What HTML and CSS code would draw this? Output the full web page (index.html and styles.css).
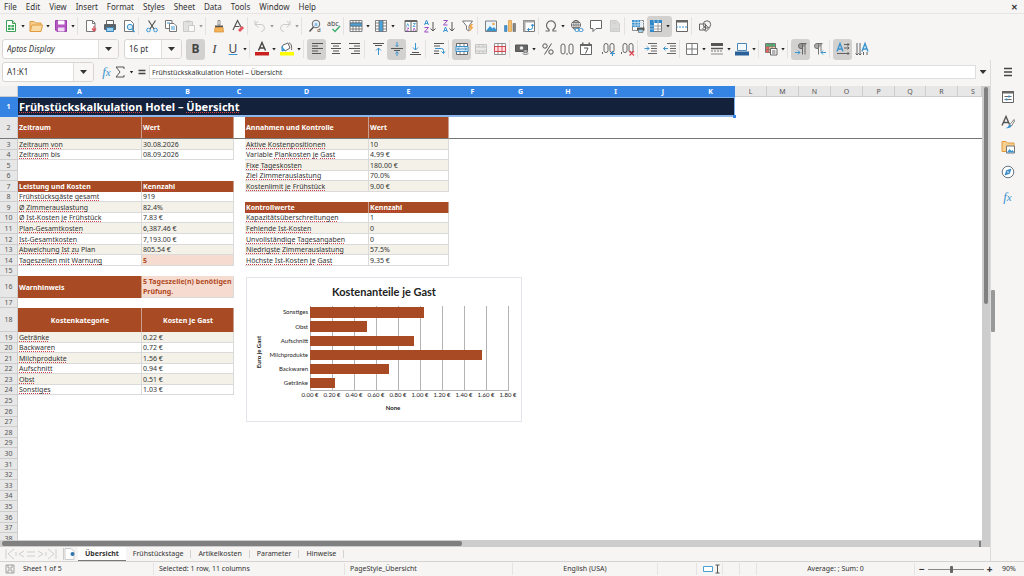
FILE: index.html
```html
<!DOCTYPE html>
<html lang="de">
<head>
<meta charset="utf-8">
<title>Frühstückskalkulation Hotel – Übersicht</title>
<link rel="stylesheet" href="styles.css">
</head>
<body>
<div class="app">
<nav class="menubar">
<button>File</button><button>Edit</button><button>View</button><button>Insert</button><button>Format</button><button>Styles</button><button>Sheet</button><button>Data</button><button>Tools</button><button>Window</button><button>Help</button>
<button class="close" aria-label="Close">✕</button>
</nav>

<div class="toolbar" role="toolbar" aria-label="Standard">
<button class="tb split" aria-label="New"><svg viewBox="0 0 14 14"><path d="M2.500 1.500h6l3 3v8h-9z" fill="#fff" stroke="#3f9e57"/><path d="M8.500 1.500v3h3" fill="#bfe3c8" stroke="#3f9e57"/><path d="M4 6h6v5H4z" fill="#3fae5f"/><path d="M4 8.500h6M7 6v5" stroke="#fff" stroke-width=".7"/></svg><i></i></button>
<button class="tb split" aria-label="Open"><svg viewBox="0 0 14 14"><path d="M1 12V2.500h4l1.500 1.500H12V6" fill="#f7cf8f" stroke="#e09b40"/><path d="M1 12.500 3 6h10.500L12 12.500z" fill="#fbdca6" stroke="#e09b40"/></svg><i></i></button>
<button class="tb split" aria-label="Save"><svg viewBox="0 0 14 14"><path d="M1.500 1.500h11v11H3l-1.500-1.500z" fill="#b558c4" stroke="#9a3fab"/><path d="M4 1.500h6.500v4H4z" fill="#fff"/><path d="M4 8.500h6.500v4H4z" fill="#f0dcf4"/></svg><i></i></button>
<span class="sep"></span>
<button class="tb" aria-label="Export as PDF"><svg viewBox="0 0 14 14"><path d="M2.500 1.500h6l2.500 2.500v8.500H2.500z" fill="#fff" stroke="#777"/><path d="M8.500 1.500v3H11" fill="none" stroke="#777"/><path d="M10 7v4.500M8 9.500l2 2.500 2-2.500" fill="none" stroke="#dc5560" stroke-width="1.300"/></svg></button>
<button class="tb" aria-label="Print"><svg viewBox="0 0 14 14"><path d="M3.500 5V1.500h7V5" fill="#fff" stroke="#666"/><rect x="1" y="5" width="12" height="6" rx="1" fill="#5c6166"/><path d="M3.500 8.500h7v4h-7z" fill="#9fd0f0" stroke="#3a84b8"/></svg></button>
<button class="tb" aria-label="Print preview"><svg viewBox="0 0 14 14"><path d="M2.500 1.500h6l3 3v8h-9z" fill="#fff" stroke="#777"/><circle cx="8" cy="8" r="2.700" fill="#d8edf9" stroke="#3a94cf"/><path d="m10 10 2.500 3" stroke="#3a94cf" stroke-width="1.300"/></svg></button>
<span class="sep"></span>
<button class="tb" aria-label="Cut"><svg viewBox="0 0 14 14"><path d="M3.500 1.500 9 10M10.500 1.500 5 10" stroke="#555" fill="none" stroke-width="1.200"/><circle cx="3.500" cy="11" r="1.800" fill="none" stroke="#3a94cf"/><circle cx="10.500" cy="11" r="1.800" fill="none" stroke="#3a94cf"/></svg></button>
<button class="tb" aria-label="Copy"><svg viewBox="0 0 14 14"><path d="M1.500 1.500h6.500v8h-6.500z" fill="#fff" stroke="#777"/><path d="M5.500 4.500h4.500l2.500 2.500v5.500h-7z" fill="#fff" stroke="#777"/><path d="M7 8h4M7 10h4M3 4h3" stroke="#3a94cf"/></svg></button>
<button class="tb split dim" aria-label="Paste"><svg viewBox="0 0 14 14"><path d="M1.500 2.500h9v10h-9z" fill="#ccc" stroke="#999"/><path d="M4 1.500h4v2H4z" fill="#999"/><path d="M6.500 6.500h6v6h-6z" fill="#fff" stroke="#999"/></svg><i></i></button>
<span class="sep"></span>
<button class="tb" aria-label="Clone formatting"><svg viewBox="0 0 14 14"><path d="M6 1.500h2V6H6z" fill="#fff" stroke="#777" stroke-width=".8"/><path d="M3 6.500h8v2H3z" fill="#555"/><path d="M3 8.500h8l.5 4.500H2.500z" fill="#f2b35a" stroke="#d98c2b" stroke-width=".7"/></svg></button>
<button class="tb" aria-label="Clear formatting"><svg viewBox="0 0 14 14"><path d="M2 11 6.500 1.500 10 8M4 7.500h4.500" stroke="#555" stroke-width="1.200" fill="none"/><path d="m7 11 4-4 2 2-4 4z" fill="#e4505b"/></svg></button>
<span class="sep"></span>
<button class="tb split dim" aria-label="Undo"><svg viewBox="0 0 14 14"><path d="M5 2 2 5.500h6a3.500 3.500 0 0 1 0 7M2 5.500 5.500 8.500M2 1.500v4" fill="none" stroke="#999"/></svg><i></i></button>
<button class="tb split dim" aria-label="Redo"><svg viewBox="0 0 14 14"><path d="m9 2 3 3.500H6a3.500 3.500 0 0 0 0 7M12 5.500 8.500 8.500M12 1.500v4" fill="none" stroke="#999"/></svg><i></i></button>
<span class="sep"></span>
<button class="tb" aria-label="Find and replace"><svg viewBox="0 0 14 14"><circle cx="8" cy="5" r="3.800" fill="#e8f3fb" stroke="#666"/><path d="M5.500 8 1.500 12.500" stroke="#555" stroke-width="1.500"/><text x="6" y="7" font-size="6" fill="#3a94cf">a</text><text x="9" y="13" font-size="6" fill="#444">d</text></svg></button>
<button class="tb" aria-label="Spelling"><svg viewBox="0 0 14 14"><text x="0" y="7" font-size="7" fill="#444">abc</text><path d="m5.500 10 2.500 2.500L13 7" fill="none" stroke="#3fae6f" stroke-width="1.400"/></svg></button>
<span class="sep"></span>
<button class="tb split" aria-label="Row"><svg viewBox="0 0 14 14"><path d="M1 1.500h12v11H1z" fill="#fff"/><path d="M1 3.500h12v4H1z" fill="#4ba3dc"/><path d="M1 1.500h12v11H1zM1 4h12M1 7h12M1 10h12M4 1.500v2.500M7 1.500v2.500M10 1.500v2.500M4 7v5.500M7 7v5.500M10 7v5.500" fill="none" stroke="#666" stroke-width=".8"/></svg><i></i></button>
<button class="tb split" aria-label="Column"><svg viewBox="0 0 14 14"><path d="M1.500 1.500h11v11h-11z" fill="#fff"/><path d="M5 1.500h4v11H5z" fill="#4ba3dc"/><path d="M1.500 1.500h11v11h-11zM5 1.500v11M9 1.500v11M1.500 4H5M1.500 7H5M1.500 10H5M9 4h3.500M9 7h3.500M9 10h3.500" fill="none" stroke="#666" stroke-width=".8"/></svg><i></i></button>
<span class="sep clear"></span>
<button class="tb" aria-label="Sort"><svg viewBox="0 0 14 14"><path d="M1 1.500h12v11H1z" fill="#fff" stroke="#666"/><path d="M1 1h12v2H1zM6.500 3h1v10h-1z" fill="#666"/><path d="m2.500 7.500 1.200-3 1.300 3M9 4.500h2.500L9 7.500h2.500" fill="none" stroke="#3a94cf" stroke-width=".8"/><path d="M2.500 9H5l-2.500 3H5M9 12l1.200-3 1.300 3" fill="none" stroke="#9a4fc0" stroke-width=".8"/></svg></button>
<button class="tb" aria-label="Sort ascending"><svg viewBox="0 0 14 14"><path d="m1.500 6 2-5 2 5M2 4.500h3" fill="none" stroke="#3a94cf"/><path d="M1.500 8.500h4l-4 4.500h4" fill="none" stroke="#9a4fc0"/><path d="M10 3v9M7.500 9.500 10 12l2.500-2.500" fill="none" stroke="#555"/></svg></button>
<button class="tb" aria-label="Sort descending"><svg viewBox="0 0 14 14"><path d="M1.500 1.500h4l-4 4.500h4" fill="none" stroke="#9a4fc0"/><path d="m1.500 13 2-5 2 5M2 11.500h3" fill="none" stroke="#3a94cf"/><path d="M10 3v9M7.500 9.500 10 12l2.500-2.500" fill="none" stroke="#555"/></svg></button>
<button class="tb" aria-label="AutoFilter"><svg viewBox="0 0 14 14"><path d="M1.500 2h10L8 7v5l-2.500-1.500V7z" fill="#fff" stroke="#777"/><path d="m10 5-2.500 4h2L8.500 13l4-5h-2l1.500-3z" fill="#f2a74a"/></svg></button>
<span class="sep"></span>
<button class="tb" aria-label="Insert image"><svg viewBox="0 0 14 14"><path d="M1.500 2h11v10.500h-11z" fill="#eaf5fc" stroke="#7a7f84"/><path d="m2 12 4-5 2.500 2.500L10 8l2.500 3v1z" fill="#3a94cf"/><circle cx="9.500" cy="5" r="1.300" fill="#f2a74a"/></svg></button>
<button class="tb" aria-label="Insert chart"><svg viewBox="0 0 14 14"><path d="M1.500 6.500h2.500v6h-2.500z" fill="#4b93cc" stroke="#2f76ae" stroke-width=".6"/><path d="M5.500 1.500h3v11h-3z" fill="#f5c06b" stroke="#d98c2b" stroke-width=".6"/><path d="M10 4.500h2.500v8H10z" fill="#888" stroke="#666" stroke-width=".6"/></svg></button>
<button class="tb" aria-label="Pivot table"><svg viewBox="0 0 14 14"><path d="M1.500 1.500h11v11h-11z" fill="#fff" stroke="#777"/><path d="M1.500 1.500h11v2h-11zM1.500 3.500h2v9h-2z" fill="#aaa"/><path d="M5.500 10.500h3a2 2 0 0 0 2-2v-3M9 7l1.500-2L12 7M7 9l-1.500 1.500L7 12" fill="none" stroke="#3a94cf"/></svg></button>
<span class="sep"></span>
<button class="tb split" aria-label="Special character"><svg viewBox="0 0 14 14"><path d="M1.500 12h3.500v-1.500a4.500 4.500 0 1 1 4 0V12h3.500" fill="none" stroke="#666" stroke-width="1.200"/></svg><i></i></button>
<button class="tb" aria-label="Hyperlink"><svg viewBox="0 0 14 14"><circle cx="6" cy="6" r="4.500" fill="#fff" stroke="#666"/><path d="M1.500 6h9M6 1.500v9M2.500 3.500h7M2.500 8.500h7" stroke="#666" stroke-width=".8"/><ellipse cx="6" cy="6" rx="2.200" ry="4.500" fill="none" stroke="#666" stroke-width=".8"/><rect x="5" y="9.500" width="4" height="3" rx="1.500" fill="#f6f5f4" stroke="#3a94cf"/><rect x="9" y="9.500" width="4" height="3" rx="1.500" fill="#f6f5f4" stroke="#3a94cf"/></svg></button>
<button class="tb" aria-label="Comment"><svg viewBox="0 0 14 14"><path d="M1.500 1.500h11v8H7l-3 3v-3H1.500z" fill="#fff" stroke="#666"/></svg></button>
<button class="tb dim" aria-label="Headers and footers"><svg viewBox="0 0 14 14"><path d="M2.500 1.500h6l3 3v8h-9z" fill="#bbb" stroke="#999"/><path d="M4 4h4M4 10h6" stroke="#999"/></svg></button>
<span class="sep"></span>
<button class="tb" aria-label="Define print area"><svg viewBox="0 0 14 14"><path d="M1.500 1.500h11v10h-11z" fill="#fff" stroke="#888"/><path d="M1 1h8v7H1z" fill="#3a94cf"/><path d="M1 3.500h12M1 6h12M4 1v10.500M7 1v10.500M10 1v10.500" stroke="#ccdfee" stroke-width=".8"/><path d="M6 8.500h7.500v3H6z" fill="#555"/><path d="M7.500 10.500h4.500v3H7.500z" fill="#9fd0f0" stroke="#555" stroke-width=".6"/></svg></button>
<button class="tb split on" aria-label="Freeze rows and columns"><svg viewBox="0 0 14 14"><path d="M1.500 1.500h11v11h-11z" fill="#fff" stroke="#777"/><path d="M1 1h12v3H1zM1 1h4v12H1z" fill="#2f88c9"/><path d="M5 7h8M5 10h8M9 4v9" stroke="#888" stroke-width=".8"/><path d="M1 7h4M5 1v3M9 1v3M1 10h4" stroke="#bcd9ee" stroke-width=".8"/></svg><i></i></button>
<button class="tb" aria-label="Split window"><svg viewBox="0 0 14 14"><path d="M1.500 1.500h11v11h-11z" fill="#fff" stroke="#666"/><path d="M1 1h12v2.500H1z" fill="#666"/><path d="M1 8h12" stroke="#3a94cf" stroke-dasharray="2 1"/></svg></button>
<span class="sep"></span>
<button class="tb" aria-label="Draw functions"><svg viewBox="0 0 14 14"><circle cx="9" cy="5.500" r="3.700" fill="none" stroke="#666"/><path d="M1.500 5h6v6h-6z" fill="none" stroke="#666"/><path d="m8 6 3 3.500-3 3-3-3z" fill="none" stroke="#666"/></svg></button>
</div>

<div class="toolbar format" role="toolbar" aria-label="Formatting">
<span class="combo fontname"><input aria-label="Font name" value="Aptos Display"><button aria-label="Font list"><b class="tri"></b></button></span>
<span class="combo fontsize"><input aria-label="Font size" value="16 pt"><button aria-label="Size list"><b class="tri"></b></button></span>
<button class="tb on glyph strong" aria-label="Bold">B</button>
<button class="tb glyph ital" aria-label="Italic">I</button>
<button class="tb split glyph under" aria-label="Underline"><span>U</span><i></i></button>
<span class="sep"></span>
<button class="tb split" aria-label="Font color"><svg viewBox="0 0 14 14"><path d="M3.500 8.500 7 .5l3.500 8M4.800 6h4.400" fill="none" stroke="#444" stroke-width="1.400"/><path d="M0 10h14v3.500H0z" fill="#c9211e"/></svg><i></i></button>
<button class="tb split" aria-label="Highlighting"><svg viewBox="0 0 14 14"><path d="m3 3 5-2 2 5-5 3-3-3z" fill="#fff" stroke="#666"/><path d="M2 4v5l3-1" fill="#4ba3dc" stroke="#3a94cf"/><path d="M9 1c2 0 3 3 2.500 7" fill="none" stroke="#666"/><path d="M0 10h14v3.500H0z" fill="#ffff00"/></svg><i></i></button>
<span class="sep"></span>
<button class="tb on" aria-label="Align left"><svg viewBox="0 0 14 14"><path d="M2 1.500h11M2 4h6M2 6.500h11M2 9h6M2 11.500h9" stroke="#555"/></svg></button>
<button class="tb" aria-label="Center"><svg viewBox="0 0 14 14"><path d="M2 1.500h10M4 4h6M2 6.500h10M4 9h6M3 11.500h8" stroke="#555"/></svg></button>
<button class="tb" aria-label="Align right"><svg viewBox="0 0 14 14"><path d="M1 1.500h11M6 4h6M1 6.500h11M6 9h6M3 11.500h9" stroke="#555"/></svg></button>
<span class="sep"></span>
<button class="tb" aria-label="Align top"><svg viewBox="0 0 14 14"><path d="M2 1.500h11M4 3.500h7" stroke="#555"/><path d="M7.500 13V6M5 8.500 7.500 6 10 8.500" fill="none" stroke="#3a94cf"/></svg></button>
<button class="tb on" aria-label="Center vertically"><svg viewBox="0 0 14 14"><path d="M1 6.500h12M4 8.500h6" stroke="#555"/><path d="M7 0v4.500M5.500 3 7 4.500 8.500 3M7 14V9.500M5.500 11.500 7 10l1.500 1.500" fill="none" stroke="#3a94cf"/></svg></button>
<button class="tb" aria-label="Align bottom"><svg viewBox="0 0 14 14"><path d="M1 12.500h11M3 10.500h7" stroke="#555"/><path d="M6.500 1v7M4 5.500 6.500 8 9 5.500" fill="none" stroke="#3a94cf"/></svg></button>
<span class="sep"></span>
<button class="tb" aria-label="Wrap text"><svg viewBox="0 0 14 14"><path d="M2 1.500h10M2 4h6M2 9h5M2 11.500h5" stroke="#555"/><path d="M3 6.500h6.500a2 2 0 0 1 2 2v3M9.500 9.500l2 2 1.500-2" fill="none" stroke="#3a94cf"/></svg></button>
<span class="sep"></span>
<button class="tb on" aria-label="Merge and center"><svg viewBox="0 0 14 14"><path d="M1.500 1.500h11v11h-11z" fill="#fff" stroke="#666"/><path d="M1 4.500h12v5H1z" fill="#d8edf9" stroke="#3a94cf"/><path d="M5 1.500v3M9 1.500v3M5 9.500v3M9 9.500v3" stroke="#666" stroke-width=".8"/><path d="M2.500 7h9M4 5.500 2.500 7 4 8.500M10 5.500 11.500 7 10 8.500" fill="none" stroke="#2f76ae" stroke-width=".8"/></svg></button>
<button class="tb dim" aria-label="Merge cells"><svg viewBox="0 0 14 14"><path d="M1.500 2.500h11v9h-11zM1.500 5h11M1.500 9h11M5 2.500V5M9 2.500V5M5 9v2.500M9 9v2.500" fill="#ddd" stroke="#888"/></svg></button>
<button class="tb" aria-label="Split cells"><svg viewBox="0 0 14 14"><path d="M1.500 1.500h11v11h-11zM5 1.500v11M9 1.500v11M1.500 4.500h11M1.500 9.500h11" fill="#fff" stroke="#777" stroke-width=".8"/><path d="M1.500 4.500h11v5h-11zM5 4.500v5M9 4.500v5" fill="#fbe1e2" stroke="#d9444f"/></svg></button>
<span class="sep"></span>
<button class="tb split" aria-label="Currency"><svg viewBox="0 0 14 14"><path d="M.5 3h12v6.500H.5z" fill="#666" stroke="#555"/><circle cx="6.500" cy="6" r="1.800" fill="#eee"/><ellipse cx="10.500" cy="9" rx="2.500" ry="1" fill="#eee" stroke="#555" stroke-width=".7"/><ellipse cx="10.500" cy="11.500" rx="2.500" ry="1" fill="#eee" stroke="#555" stroke-width=".7"/></svg><i></i></button>
<button class="tb" aria-label="Percent"><svg viewBox="0 0 14 14"><circle cx="4" cy="4" r="2.200" fill="none" stroke="#555"/><circle cx="10" cy="10" r="2.200" fill="none" stroke="#555"/><path d="M10.500 1.500 3.500 12.500" stroke="#555"/></svg></button>
<button class="tb" aria-label="Number"><svg viewBox="0 0 14 14"><rect x="1" y="2" width="4" height="10" rx="2" fill="none" stroke="#666"/><rect x="9" y="2" width="4" height="10" rx="2" fill="none" stroke="#666"/><path d="M7 11v2" stroke="#666"/></svg></button>
<button class="tb" aria-label="Date"><svg viewBox="0 0 14 14"><path d="M1.500 2.500h11v10h-11z" fill="#fff" stroke="#666"/><path d="M1 2h12v2H1zM3 .5h1.500V3H3zM9.500.5H11V3H9.500z" fill="#666"/><path d="M5 6h4l-2.500 5.500" fill="none" stroke="#555"/></svg></button>
<span class="sep clear"></span>
<button class="tb" aria-label="Add decimal place"><svg viewBox="0 0 14 14"><path d="M.5 10v2" stroke="#666"/><rect x="2" y="1.500" width="4" height="9" rx="2" fill="none" stroke="#666"/><rect x="8" y="1.500" width="4" height="9" rx="2" fill="none" stroke="#666"/><path d="M8 11.500h5M10.500 9v5" stroke="#3a94cf" stroke-width="1.200"/></svg></button>
<button class="tb" aria-label="Delete decimal place"><svg viewBox="0 0 14 14"><path d="M.5 10v2" stroke="#666"/><rect x="2" y="1.500" width="4" height="9" rx="2" fill="none" stroke="#666"/><rect x="8" y="1.500" width="4" height="9" rx="2" fill="none" stroke="#666"/><path d="m8.500 9 4.500 4.500M13 9l-4.500 4.500" stroke="#e0444f" stroke-width="1.200"/></svg></button>
<span class="sep"></span>
<button class="tb" aria-label="Increase indent"><svg viewBox="0 0 14 14"><path d="M4 1.500h9M7 4h6M7 6.500h6M7 9h6M4 11.500h9" stroke="#666"/><path d="M.5 6.500H5M3 4.500l2 2-2 2" fill="none" stroke="#3a94cf"/></svg></button>
<button class="tb" aria-label="Decrease indent"><svg viewBox="0 0 14 14"><path d="M4 1.500h9M7 4h6M7 6.500h6M7 9h6M4 11.500h9" stroke="#666"/><path d="M.5 6.500H5M2.500 4.500l-2 2 2 2" fill="none" stroke="#3a94cf"/></svg></button>
<span class="sep"></span>
<button class="tb split" aria-label="Borders"><svg viewBox="0 0 14 14"><path d="M1.500 1.500h11v11h-11zM7 1.500v11M1.500 7h11" fill="#fff" stroke="#777"/></svg><i></i></button>
<button class="tb split" aria-label="Border style"><svg viewBox="0 0 14 14"><path d="M1 1h12v3H1z" fill="#555"/><path d="M1 6.500h12" stroke="#555" stroke-width="1.500"/><path d="M1 9h12" stroke="#777" stroke-dasharray="2 1"/><path d="M1 11.500h12v1H1z" fill="#888"/></svg><i></i></button>
<button class="tb split" aria-label="Border color"><svg viewBox="0 0 14 14"><path d="M2.500 1.500h9v7h-9z" fill="#f4f8fb" stroke="#4b88b8"/><path d="M0 9.500h14v4H0z" fill="#2a6099"/></svg><i></i></button>
<span class="sep"></span>
<button class="tb split" aria-label="Conditional formatting"><svg viewBox="0 0 14 14"><path d="M1.500 1.500h10v9h-10z" fill="#f7c9a2" stroke="#777"/><path d="M2 2h9v2.500H2z" fill="#4fb46f"/><path d="M2 4.500h3v6H2z" fill="#e2665a"/><path d="M1.500 4.500h10M1.500 7.500h10M5 1.500v9M8 1.500v9" stroke="#777" stroke-width=".7"/><path d="M6.500 6.500h6.500v6.500H6.500z" fill="#fff" stroke="#666"/><path d="M8 9h3.500M8 11h3.500" stroke="#666"/></svg><i></i></button>
<span class="sep"></span>
<button class="tb on" aria-label="Left to right"><svg viewBox="0 0 14 14"><path d="M12.500 1.500H7a2.500 2.500 0 0 0 0 5h1" fill="#999" stroke="#666"/><path d="M8.500 1.500v11M11 1.500v11" stroke="#666"/><path d="M1 10.500h5M4 8.500l2 2-2 2" fill="none" stroke="#3a94cf"/></svg></button>
<button class="tb" aria-label="Right to left"><svg viewBox="0 0 14 14"><path d="M9.500 1.500H4a2.500 2.500 0 0 0 0 5h1.500" fill="#aaa" stroke="#777"/><path d="M5.500 1.500v11M8 1.500v8" stroke="#777"/><path d="M8 10.500h5M10 8.500l-2 2 2 2" fill="none" stroke="#3a94cf"/></svg></button>
<span class="sep"></span>
<button class="tb on" aria-label="Horizontal text"><svg viewBox="0 0 14 14"><path d="M1 9.500 4 1.500l3 8M2 7h4" fill="none" stroke="#3a94cf" stroke-width="1.400"/><path d="M8 2.500h5M8 6h5M1 11.500h12M11.500 1 13 2.500 11.500 4M11.500 4.500 13 6l-1.500 1.500M11.500 10l1.500 1.500-1.500 1.500" fill="none" stroke="#555" stroke-width=".9"/></svg></button>
<button class="tb" aria-label="Vertical text"><svg viewBox="0 0 14 14"><path d="M7 9.500 10 1.500l3 8M8 7h4" fill="none" stroke="#3a94cf" stroke-width="1.400"/><path d="M2 1v12M5 1v12M.500 11.500 2 13l1.500-1.500M3.500 11.500 5 13l1.500-1.500M8.500 10v3M12 10v3" fill="none" stroke="#555" stroke-width=".9"/></svg></button>
</div>

<div class="body">
<main class="main">
<div class="formulabar">
<span class="combo namebox"><input aria-label="Name box" value="A1:K1"><button aria-label="Names"><b class="tri"></b></button></span>
<button class="fb" aria-label="Function wizard"><span class="fx">f<small>x</small></span></button>
<button class="fb sum" aria-label="Select function"><svg viewBox="0 0 10 12"><path d="M9 3V1H1l4 5-4 5h8V9" fill="none" stroke="#555"/></svg><i></i></button>
<button class="fb" aria-label="Formula"><svg viewBox="0 0 10 12"><path d="M1.500 4.500h7M1.500 7.500h7" stroke="#444" stroke-width="1.300"/></svg></button>
<input class="formula" aria-label="Formula input" value="Frühstückskalkulation Hotel – Übersicht">
<button class="expand" aria-label="Expand formula bar"><b class="tri"></b></button>
</div>

<div class="gridarea">
<div class="sheet">
<table>
<colgroup><col class="c-row"><col class="c-a"><col class="c-b"><col class="c-c"><col class="c-a"><col class="c-e"><col class="c-w"><col class="c-w"><col class="c-v"><col class="c-w"><col class="c-v"><col class="c-w"><col class="c-n"><col class="c-n"><col class="c-n"><col class="c-n"><col class="c-n"><col class="c-m"><col class="c-n"><col></colgroup>
<thead><tr class="cols"><th class="corner"></th><th class="sel">A</th><th class="sel">B</th><th class="sel">C</th><th class="sel">D</th><th class="sel">E</th><th class="sel">F</th><th class="sel">G</th><th class="sel">H</th><th class="sel">I</th><th class="sel">J</th><th class="sel">K</th><th>L</th><th>M</th><th>N</th><th>O</th><th>P</th><th>Q</th><th>R</th><th class="last">S</th></tr></thead>
<tbody>
<tr class="r1"><th class="sel">1</th><td class="title" colspan="11"><u>Frühstückskalkulation</u> Hotel – <u>Übersicht</u><span class="handle"></span></td></tr>
<tr class="r2"><th>2</th><td class="h"><u>Zeitraum</u></td><td class="h"><u>Wert</u></td><td></td><td class="h">Annahmen und Kontrolle</td><td class="h">Wert</td><td colspan="14"></td></tr>
<tr><th>3</th><td class="d z"><u>Zeitraum</u> <u>von</u></td><td class="d z">30.08.2026</td><td></td><td class="d z"><u>Aktive Kostenpositionen</u></td><td class="d z">10</td></tr>
<tr class="s"><th>4</th><td class="d"><u>Zeitraum</u> bis</td><td class="d">08.09.2026</td><td></td><td class="d">Variable <u>Plankosten</u> <u>je</u> <u>Gast</u></td><td class="d">4.99 €</td></tr>
<tr><th>5</th><td></td><td></td><td></td><td class="d z"><u>Fixe</u> <u>Tageskosten</u></td><td class="d z">180.00 €</td></tr>
<tr class="s"><th>6</th><td></td><td></td><td></td><td class="d"><u>Ziel</u> <u>Zimmerauslastung</u></td><td class="d">70.0%</td></tr>
<tr><th>7</th><td class="h"><u>Leistung</u> <u>und</u> <u>Kosten</u></td><td class="h"><u>Kennzahl</u></td><td></td><td class="d z"><u>Kostenlimit</u> <u>je</u> <u>Frühstück</u></td><td class="d z">9.00 €</td></tr>
<tr class="s"><th>8</th><td class="d"><u>Frühstücksgäste</u> <u>gesamt</u></td><td class="d">919</td></tr>
<tr><th>9</th><td class="d z"><u>Ø</u> <u>Zimmerauslastung</u></td><td class="d z">82.4%</td><td></td><td class="h"><u>Kontrollwerte</u></td><td class="h"><u>Kennzahl</u></td></tr>
<tr class="s"><th>10</th><td class="d"><u>Ø</u> <u>Ist-Kosten</u> <u>je</u> <u>Frühstück</u></td><td class="d">7.83 €</td><td></td><td class="d"><u>Kapazitätsüberschreitungen</u></td><td class="d">1</td></tr>
<tr><th>11</th><td class="d z"><u>Plan-Gesamtkosten</u></td><td class="d z">6,387.46 €</td><td></td><td class="d z"><u>Fehlende</u> <u>Ist-Kosten</u></td><td class="d z">0</td></tr>
<tr><th>12</th><td class="d"><u>Ist-Gesamtkosten</u></td><td class="d">7,193.00 €</td><td></td><td class="d"><u>Unvollständige</u> <u>Tagesangaben</u></td><td class="d">0</td></tr>
<tr class="s"><th>13</th><td class="d z"><u>Abweichung</u> <u>Ist</u> <u>zu</u> Plan</td><td class="d z">805.54 €</td><td></td><td class="d z"><u>Niedrigste</u> <u>Zimmerauslastung</u></td><td class="d z">57.5%</td></tr>
<tr><th>14</th><td class="d"><u>Tageszeilen</u> <u>mit</u> <u>Warnung</u></td><td class="d warn">5</td><td></td><td class="d"><u>Höchste</u> <u>Ist-Kosten</u> <u>je</u> <u>Gast</u></td><td class="d">9.35 €</td></tr>
<tr class="s"><th>15</th></tr>
<tr class="r16"><th>16</th><td class="h">Warnhinweis</td><td class="d warn wrap">5 Tageszeile(n) benötigen Prüfung.</td></tr>
<tr class="s"><th>17</th></tr>
<tr class="r18"><th>18</th><td class="h mid">Kostenkategorie</td><td class="h mid">Kosten je Gast</td></tr>
<tr><th>19</th><td class="d z"><u>Getränke</u></td><td class="d z">0.22 €</td></tr>
<tr class="s"><th>20</th><td class="d"><u>Backwaren</u></td><td class="d">0.72 €</td></tr>
<tr><th>21</th><td class="d z"><u>Milchprodukte</u></td><td class="d z">1.56 €</td></tr>
<tr class="s"><th>22</th><td class="d"><u>Aufschnitt</u></td><td class="d">0.94 €</td></tr>
<tr><th>23</th><td class="d z"><u>Obst</u></td><td class="d z">0.51 €</td></tr>
<tr class="s"><th>24</th><td class="d"><u>Sonstiges</u></td><td class="d">1.03 €</td></tr>
<tr><th>25</th></tr>
<tr><th>26</th></tr>
<tr class="s"><th>27</th></tr>
<tr><th>28</th></tr>
<tr class="s"><th>29</th></tr>
<tr><th>30</th></tr>
<tr><th>31</th></tr>
<tr class="s"><th>32</th></tr>
<tr><th>33</th></tr>
<tr class="s"><th>34</th></tr>
<tr><th>35</th></tr>
<tr><th>36</th></tr>
<tr class="s"><th>37</th></tr>
<tr><th>38</th></tr>
</tbody>
</table>
<svg class="chart" viewBox="0 0 276 145" role="img" aria-label="Kostenanteile je Gast">
<rect x=".5" y=".5" width="275" height="144" fill="#fff" stroke="#e3e3ea"/>
<text class="ct" x="138" y="19">Kostenanteile je Gast</text>
<path d="M64.500 29v85M86.500 29v85M108.500 29v85M130.500 29v85M152.500 29v85M174.500 29v85M196.500 29v85M218.500 29v85M240.500 29v85M262.500 29v85M64 113.500h199" stroke="#b3b3b3" fill="none"/>
<g fill="#a84b25"><rect x="64" y="30" width="114" height="11"/><rect x="64" y="44" width="57" height="11"/><rect x="64" y="59" width="104" height="10"/><rect x="64" y="73" width="172" height="10"/><rect x="64" y="87" width="79" height="10"/><rect x="64" y="101" width="25" height="10"/></g>
<g class="cl"><text x="62" y="37">Sonstiges</text><text x="62" y="52">Obst</text><text x="62" y="66">Aufschnitt</text><text x="62" y="80">Milchprodukte</text><text x="62" y="94">Backwaren</text><text x="62" y="108">Getränke</text></g>
<g class="cx"><text x="64" y="120">0.00 €</text><text x="86" y="120">0.20 €</text><text x="108" y="120">0.40 €</text><text x="130" y="120">0.60 €</text><text x="152" y="120">0.80 €</text><text x="174" y="120">1.00 €</text><text x="196" y="120">1.20 €</text><text x="218" y="120">1.40 €</text><text x="240" y="120">1.60 €</text><text x="262" y="120">1.80 €</text></g>
<text class="ca" x="147" y="133">None</text>
<text class="ca" transform="translate(15 75) rotate(-90)">Euro je Gast</text>
</svg>
</div>
<div class="vscroll"><div class="vthumb"></div></div>
</div>
<div class="hscroll"><div class="hthumb"></div><div class="hgrip"></div></div>
<div class="tabs">
<span class="nav"><svg viewBox="0 0 52 12"><path d="M1 1v10M9 1 3 6l6 5M51 1v10M43 1l6 5-6 5M19 3l-5 3 5 3M33 3l5 3-5 3M22 4h8M22 8h8M11 4v4M41 4v4" fill="none" stroke="#cfcfcf"/></svg></span>
<button class="addtab" aria-label="Add sheet"><svg viewBox="0 0 12 12"><path d="M1 .500h6l3 3v8H1z" fill="#fff" stroke="#ccc"/><circle cx="8.500" cy="6" r="2" fill="#2f76ae"/></svg></button>
<button class="tab active">Übersicht</button><button class="tab">Frühstückstage</button><button class="tab">Artikelkosten</button><button class="tab">Parameter</button><button class="tab">Hinweise</button>
</div>
</main>
<aside class="sidebar">
<span class="grip"></span>
<button aria-label="Sidebar settings"><svg viewBox="0 0 14 14"><path d="M3 3.500h8M3 7h8M3 10.500h8" stroke="#444" stroke-width="1.300"/></svg></button>
<button aria-label="Properties"><svg viewBox="0 0 14 14"><path d="M1.500 1.500h11v11h-11z" fill="#fff" stroke="#666"/><path d="M1 1h12v2.500H1z" fill="#666"/><path d="M3.500 6.500h7M3.500 9.500h7" stroke="#666"/><path d="M8 5.500v2M5.500 8.500v2" stroke="#3a94cf" stroke-width="1.500"/></svg></button>
<button aria-label="Styles"><svg viewBox="0 0 14 14"><path d="M1 10.500 5 1.500l3.500 8M2.500 7.500h5" fill="none" stroke="#555" stroke-width="1.400"/><path d="m13 4.500-4 5 1.500 1.500L13.500 6z" fill="#fff" stroke="#666" stroke-width=".8"/><path d="M4.500 13c3 0 2.500-3 4.500-3.500l1.500 1.500c-1 2-3.500 2.500-6 2z" fill="#3a94cf"/></svg></button>
<button aria-label="Gallery"><svg viewBox="0 0 14 14"><path d="M1 11.500V1.500h4l1.500 1.500H13v8.500z" fill="#f7cf8f" stroke="#e09b40"/><path d="M5.500 6h8v7h-8z" fill="#fff" stroke="#777"/><path d="m6 12.500 2.500-3.500 2 2 1-1 2 2.500z" fill="#3a94cf"/></svg></button>
<button aria-label="Navigator"><svg viewBox="0 0 14 14"><circle cx="7" cy="7" r="5.800" fill="#fff" stroke="#6a7580"/><path d="M10 4 8.500 8.500 4 10l1.500-4.500z" fill="#3a94cf" stroke="#2f76ae" stroke-width=".6"/><circle cx="7" cy="7" r=".8" fill="#fff"/></svg></button>
<button aria-label="Functions"><span class="fx">f<small>x</small></span></button>
</aside>
</div>

<footer class="status">
<span class="st st-save"><svg viewBox="0 0 10 10"><path d="M1 1h8v8H1zM3 1v3h4V1M3 9V6h4v3" fill="none" stroke="#999" stroke-width=".9"/></svg>Sheet 1 of 5</span>
<span class="st st-sel">Selected: 1 row, 11 columns</span>
<span class="st st-page">PageStyle_Übersicht</span>
<span class="st st-lang">English (USA)</span>
<span class="st st-ins"></span>
<span class="st st-mode"><svg viewBox="0 0 18 10"><path d="M1.500 2.500h9v5h-9z" fill="#fff" stroke="#4aa0d0"/><path d="M13.500 1h4M13.500 9h4M15.500 1v8" stroke="#555" fill="none"/></svg></span>
<span class="st st-e"></span><span class="st st-e"></span>
<span class="st st-avg">Average: ; Sum: 0</span>
<span class="st-zoom"><button aria-label="Zoom out">−</button><input type="range" min="0" max="100" value="42" aria-label="Zoom"><button aria-label="Zoom in">+</button></span>
<span class="st-pct">90%</span>
</footer>
</div>
</body>
</html>
```
FILE: styles.css
```css
* { box-sizing: border-box; }
body { margin: 0; font: 7px/10px "Noto Sans", "Open Sans", sans-serif; color: #333; background: #f6f5f4; }
button, input { font: inherit; color: inherit; border: 0; background: none; padding: 0; margin: 0; min-width: 0; }
.app { height: 100vh; display: flex; flex-direction: column; overflow: hidden; }

.menubar { display: flex; align-items: center; height: 14px; padding: 0 6px 0 4px; gap: 9px; border-bottom: 1px solid #e6e5e4; flex: none; font-size: 8px; }
.menubar .close { margin-left: auto; font-weight: bold; }

.toolbar { display: flex; align-items: center; height: 24px; padding-left: 2px; flex: none; }
.toolbar.format { height: 22px; }
.tb { width: 19px; height: 21px; flex: none; display: flex; align-items: center; justify-content: center; border-radius: 3px; }
.tb.split { width: 25px; justify-content: flex-start; padding-left: 2px; gap: 3px; }
.tb svg { width: 14px; height: 14px; flex: none; overflow: visible; }
.tb.on { background: #d3d1cf; }
.tb.dim { opacity: .45; }
.tb i, .fb i { width: 4px; height: 3px; background: #222; clip-path: polygon(0 0, 100% 0, 50% 100%); }
.sep { width: 4px; height: 18px; border-left: 1px solid #e4e2e0; flex: none; }
.sep.clear { border-color: transparent; }
.glyph { font-size: 12px; color: #444; }
.glyph.strong { font-weight: bold; }
.glyph.ital { font-family: "Liberation Serif", serif; font-style: italic; font-size: 13px; }
.glyph.under span { width: 14px; text-align: center; text-decoration: underline #3a94cf; }

.combo { display: flex; height: 20px; background: #fff; border: 1px solid #d8d5d2; border-radius: 3px; flex: none; overflow: hidden; font-size: 8px; }
.combo input { flex: 1; padding-left: 4px; }
.combo button { width: 20px; display: flex; align-items: center; justify-content: center; background: #f8f7f6; border-left: 1px solid #e0dedc; }
.fontname { width: 117px; margin-right: 5px; font-style: italic; }
.fontsize { width: 58px; margin-right: 4px; }
.tri { width: 7px; height: 4px; background: #333; clip-path: polygon(0 0, 100% 0, 50% 100%); }

.body { flex: 1; display: flex; min-height: 0; }
.main { flex: 1; display: flex; flex-direction: column; min-width: 0; border-right: 1px solid #dddbd9; }
.formulabar { display: flex; align-items: center; height: 24px; padding-left: 2px; flex: none; }
.namebox { width: 92px; margin-right: 5px; }
.fb { height: 16px; display: flex; align-items: center; justify-content: center; width: 15px; gap: 5px; flex: none; }
.fb svg { width: 10px; height: 12px; }
.fb.sum { width: 20px; }
.fx { font: italic 13px/14px "Liberation Serif", serif; color: #3a94cf; white-space: nowrap; }
.fx small { font-size: 11px; }
.formula { flex: 1; height: 14px; background: #fff; border: 1px solid #e0dedc; padding-left: 2px; }
.expand { width: 14px; display: flex; align-items: center; justify-content: center; }

.gridarea { flex: 1; display: flex; min-height: 0; padding-top: 2px; }
.sheet { flex: 1; position: relative; overflow: hidden; background: #fff; min-width: 0; }
table { table-layout: fixed; width: 100%; border-spacing: 0; line-height: 9px; }
.c-row { width: 18px; } .c-a { width: 124px; } .c-b { width: 92px; } .c-c { width: 11px; } .c-e { width: 80px; }
.c-w { width: 48px; } .c-v { width: 47px; } .c-n { width: 32px; } .c-m { width: 31px; }
th, td { padding: 0; height: 11px; white-space: nowrap; vertical-align: middle; }
td { padding-left: 1px; }
.s th, .s td { height: 10px; }
th { background: #e7e7e7; color: #555; font-weight: normal; border-right: 1px solid #cdcdcd; border-bottom: 1px solid #cdcdcd; text-align: center; }
th.sel { background: #3584e4; color: #fff; font-weight: bold; border-color: #3584e4; }
.cols th.corner { background: #f0f0f0; }
.cols th.last { padding-left: 7px; }
.r1 > * { height: 20px; }
.r2 > * { height: 22px; border-bottom: 1px solid #777; }
td.title { position: relative; background: #14213a; color: #fff; font-size: 11px; font-weight: bold; line-height: 14px; border: 1px solid #7fb0ee; border-bottom: 2px solid #8db6ea; border-left: 0; }
.handle { position: absolute; right: -2px; bottom: -3px; width: 3px; height: 3px; background: #3584e4; }
td.h { background: #a84b25; color: #fff; font-weight: bold; border-right: 1px solid #c9a08e; }
td.d { border-right: 1px solid #dadada; border-bottom: 1px solid #dadada; }
td.z { background: #f3f1e8; }
td.warn { background: #f6dbd1; color: #b04a22; font-weight: bold; }
td.wrap { white-space: normal; line-height: 10px; }
td.mid { text-align: center; }
.r16 > * { height: 22px; }
.r18 > * { height: 24px; }
u { text-decoration: underline dotted #d5404a 1px; text-underline-offset: 1px; text-decoration-skip-ink: none; }
.chart { position: absolute; left: 246px; top: 191px; width: 276px; height: 145px; font-family: Lato, sans-serif; font-size: 6px; fill: #222; }
.ct { font-size: 11px; font-weight: bold; text-anchor: middle; }
.ca { font-weight: bold; text-anchor: middle; }
.cl { text-anchor: end; }
.cx { text-anchor: middle; }

.vscroll { width: 8px; background: #cdcdcd; padding: 1px 2px; }
.vthumb { height: 48%; border-radius: 2px; background: #808080; }
.hscroll { height: 7px; background: #cdcdcd; display: flex; align-items: center; justify-content: space-between; padding: 0 9px 0 2px; flex: none; }
.hthumb { width: 47%; height: 5px; border-radius: 2px; background: #808080; }
.hgrip { width: 2px; height: 6px; background: #808080; }

.tabs { display: flex; align-items: center; height: 14px; flex: none; }
.nav { width: 57px; padding-left: 5px; margin-right: 6px; display: flex; }
.nav svg { width: 52px; height: 12px; }
.addtab { width: 14px; margin-right: 1px; display: flex; border-left: 1px solid #ccc; }
.addtab svg { width: 12px; height: 12px; }
.tab { height: 8px; line-height: 8px; padding: 0 7px; border-right: 1px solid #d5d3d1; }
.tab.active { height: 14px; background: #fff; font-weight: bold; border-right: 0; border-bottom: 1px solid #777; }

.sidebar { width: 33px; flex: none; position: relative; display: flex; flex-direction: column; align-items: center; gap: 9px; padding-top: 4px; }
.sidebar button { width: 16px; height: 16px; display: flex; align-items: center; justify-content: center; }
.sidebar svg { width: 14px; height: 14px; }
.grip { position: absolute; left: 0; top: 46%; width: 4px; height: 42px; background: #999; border-radius: 1px; }

.status { display: flex; align-items: center; height: 15px; flex: none; border-top: 1px solid #d5d3d1; }
.st { height: 12px; display: flex; align-items: center; border-right: 1px solid #e6e4e2; flex: none; }
.st-save { width: 154px; padding-left: 5px; gap: 8px; }
.st-save svg { width: 10px; height: 10px; }
.st-sel { width: 191px; padding-left: 5px; }
.st-page { width: 168px; padding-left: 5px; }
.st.st-lang { flex: 1; justify-content: center; }
.st-ins { width: 39px; }
.st-mode { width: 26px; padding-left: 5px; }
.st-mode svg { width: 18px; height: 10px; }
.st-e { width: 17px; }
.st-avg { width: 158px; justify-content: center; }
.st-zoom { width: 84px; display: flex; align-items: center; gap: 3px; padding-left: 4px; font-weight: bold; flex: none; }
.st-zoom button { font-size: 10px; }
.st-zoom input { width: 56px; height: 10px; -webkit-appearance: none; appearance: none; background: linear-gradient(#888, #888) center / 100% 1px no-repeat; }
.st-zoom input::-webkit-slider-thumb { -webkit-appearance: none; width: 3px; height: 7px; background: #666; border-radius: 1px; }
.st-pct { width: 25px; padding-left: 3px; flex: none; }
```
